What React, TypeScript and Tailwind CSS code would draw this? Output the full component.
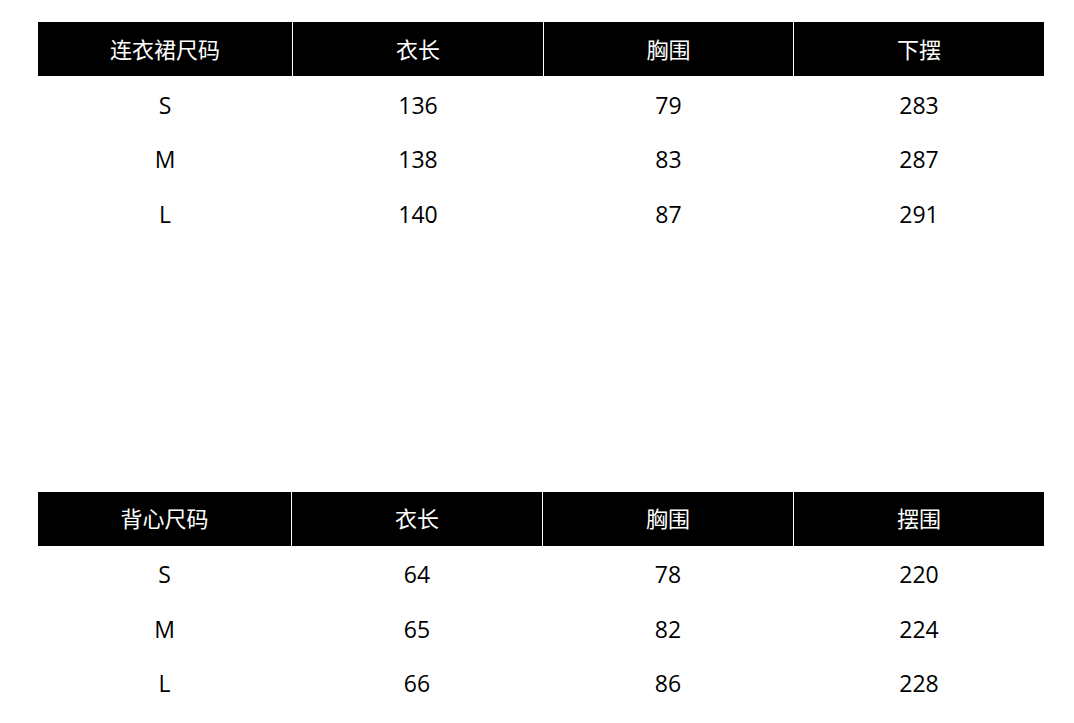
const dress = {
  title: "连衣裙尺码",
  cols: ["衣长", "胸围", "下摆"],
  grid: "grid-cols-[254px_250px_249px_250px]",
  rows: [
    ["S", "136", "79", "283"],
    ["M", "138", "83", "287"],
    ["L", "140", "87", "291"],
  ],
};

const vest = {
  title: "背心尺码",
  cols: ["衣长", "胸围", "摆围"],
  grid: "grid-cols-[253px_250px_250px_250px]",
  rows: [
    ["S", "64", "78", "220"],
    ["M", "65", "82", "224"],
    ["L", "66", "86", "228"],
  ],
};

function SizeTable({ title, cols, grid, rows }: { title: string; cols: string[]; grid: string; rows: string[][] }) {
  return (
    <div className="w-[1006px]">
      <div className={`grid ${grid} gap-x-px h-[54px]`}>
        {[title, ...cols].map(h => (
          <div key={h} className="bg-black text-white flex items-center justify-center text-[22px]">
            {h}
          </div>
        ))}
      </div>
      {rows.map(r => (
        <div key={r[0]} className={`grid ${grid} gap-x-px h-[54.5px]`}>
          {r.map((c, i) => (
            <div key={i} className="flex items-center justify-center text-[23px] text-black pt-[3px]">
              {c}
            </div>
          ))}
        </div>
      ))}
    </div>
  );
}

export default function App() {
  return (
    <div
      className="w-[1074px] h-[723px] bg-white pt-[22px] pl-[38px] flex flex-col gap-[252px] overflow-hidden"
      style={{ fontFamily: "'Open Sans', 'Noto Sans CJK SC', sans-serif" }}
    >
      <SizeTable {...dress} />
      <SizeTable {...vest} />
    </div>
  );
}
